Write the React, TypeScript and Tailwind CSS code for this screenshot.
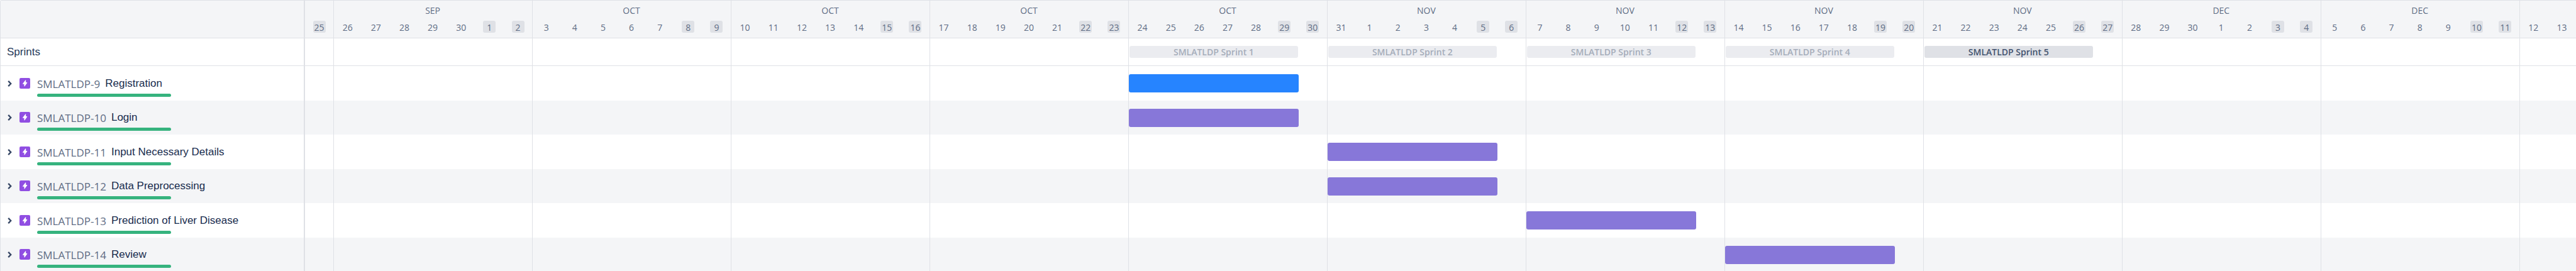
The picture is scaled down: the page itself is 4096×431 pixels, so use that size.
type Week = { month: string; days: number[] };

const weeks: Week[] = [
  { month: "SEP", days: [26, 27, 28, 29, 30, 1, 2] },
  { month: "OCT", days: [3, 4, 5, 6, 7, 8, 9] },
  { month: "OCT", days: [10, 11, 12, 13, 14, 15, 16] },
  { month: "OCT", days: [17, 18, 19, 20, 21, 22, 23] },
  { month: "OCT", days: [24, 25, 26, 27, 28, 29, 30] },
  { month: "NOV", days: [31, 1, 2, 3, 4, 5, 6] },
  { month: "NOV", days: [7, 8, 9, 10, 11, 12, 13] },
  { month: "NOV", days: [14, 15, 16, 17, 18, 19, 20] },
  { month: "NOV", days: [21, 22, 23, 24, 25, 26, 27] },
  { month: "DEC", days: [28, 29, 30, 1, 2, 3, 4] },
  { month: "DEC", days: [5, 6, 7, 8, 9, 10, 11] },
];

const sprints = [
  { name: "SMLATLDP Sprint 1", start: "col-start-30", active: false },
  { name: "SMLATLDP Sprint 2", start: "col-start-37", active: false },
  { name: "SMLATLDP Sprint 3", start: "col-start-44", active: false },
  { name: "SMLATLDP Sprint 4", start: "col-start-51", active: false },
  { name: "SMLATLDP Sprint 5", start: "col-start-58", active: true },
];

const epics = [
  { id: "SMLATLDP-9", title: "Registration", start: "col-start-30", color: "bg-[#2684ff]" },
  { id: "SMLATLDP-10", title: "Login", start: "col-start-30", color: "bg-[#8777d9]" },
  { id: "SMLATLDP-11", title: "Input Necessary Details", start: "col-start-37", color: "bg-[#8777d9]" },
  { id: "SMLATLDP-12", title: "Data Preprocessing", start: "col-start-37", color: "bg-[#8777d9]" },
  { id: "SMLATLDP-13", title: "Prediction of Liver Disease", start: "col-start-44", color: "bg-[#8777d9]" },
  { id: "SMLATLDP-14", title: "Review", start: "col-start-51", color: "bg-[#8777d9]" },
];

// Every timeline band shares one track per day.
const DAY_GRID = "grid grid-cols-[repeat(80,minmax(0,1fr))]";
const ROW = "odd:h-[55px] even:h-[54px] odd:bg-white even:bg-[#f4f5f7]";

function Day({ value, weekend = false }: { value: number; weekend?: boolean }) {
  return (
    <div className="flex justify-center">
      <span
        className={`h-[19px] w-5 rounded-[3px] pt-px text-center leading-[19px] ${weekend ? "bg-[#dfe1e6]" : ""}`}
      >
        {value}
      </span>
    </div>
  );
}

function TimelineHeader() {
  return (
    <div className={`${DAY_GRID} h-[60px] border-b border-[#dfe1e6] bg-[#f4f5f7] pt-1.5 text-sm text-[#5e6c84]`}>
      <div className="pt-[26px]">
        <Day value={25} weekend />
      </div>
      {weeks.map((week, i) => (
        <div key={i} className="col-span-7">
          <div className="mb-1.5 h-5 text-center leading-5">{week.month}</div>
          <div className="grid grid-cols-7">
            {week.days.map((d, j) => (
              <Day key={d} value={d} weekend={j > 4} />
            ))}
          </div>
        </div>
      ))}
      <div className="col-span-2 grid grid-cols-2 pt-[26px]">
        <Day value={12} />
        <Day value={13} />
      </div>
    </div>
  );
}

function SprintBand() {
  return (
    <div className={`${DAY_GRID} h-11 items-center border-b border-[#dfe1e6] bg-white`}>
      {sprints.map((s) => (
        <div key={s.name} className={`${s.start} col-span-6 row-start-1 pr-px pl-0.5`}>
          <div
            className={`h-[19px] rounded-[3px] text-center text-sm leading-[19px] font-semibold ${
              s.active ? "bg-[#dfe1e6] text-[#42526e]" : "bg-[#ebecf0] text-[#a5adba]"
            }`}
          >
            {s.name}
          </div>
        </div>
      ))}
    </div>
  );
}

function WeekLines() {
  return (
    <div className={`${DAY_GRID} pointer-events-none absolute inset-0`}>
      <div />
      {weeks.map((_, i) => (
        <div key={i} className="col-span-7 border-l border-[#dfe1e6]" />
      ))}
      <div className="col-span-2 border-l border-[#dfe1e6]" />
    </div>
  );
}

function EpicRow({ id, title }: { id: string; title: string }) {
  return (
    <li className={`${ROW} flex flex-col justify-end pb-1.5`}>
      <div className="flex h-[33px] items-center pl-[11px]">
        <button type="button" aria-label={`Expand ${title}`} className="mr-3 flex w-[7px] justify-center">
          <svg width="7" height="10" viewBox="0 0 7 10" fill="none" stroke="#344563" strokeWidth="2.3">
            <path d="M1.2 0.9 5.2 5 1.2 9.1" />
          </svg>
        </button>
        <svg className="mr-[11px]" width="17" height="17" viewBox="0 0 16 16" aria-hidden="true">
          <rect width="16" height="16" rx="2" fill="#904ee2" />
          <path d="M8.8 3.3c.3-.4.8-.2.8.3v3.1h1.5c.4 0 .6.4.4.7L7.8 12.4c-.3.4-.8.2-.8-.3V9.1H5.2c-.4 0-.6-.4-.4-.7z" fill="#fff" />
        </svg>
        <a href={`#${id}`} className="mr-2 pt-[3px] text-[17px] leading-5 text-[#5e6c84]">
          {id}
        </a>
        <span className="font-['Liberation_Sans',Arial,sans-serif] text-[17px] leading-5 text-[#172b4d]">{title}</span>
      </div>
      <div
        role="progressbar"
        aria-label={`${title} progress`}
        aria-valuenow={100}
        className="ml-[58px] h-[5px] w-[213px] rounded-full bg-[#36b37e]"
      />
    </li>
  );
}

export default function App() {
  return (
    <main className="flex h-screen items-start overflow-hidden rounded-tl-[3px] border-t border-l border-[#dfe1e6] bg-white font-['Open_Sans','Noto_Sans',sans-serif]">
      <section className="w-[484px] shrink-0 border-r-2 border-[#dfe1e6]">
        <div className="h-[60px] border-b border-[#dfe1e6] bg-[#f4f5f7]" />
        <h2 className="flex h-11 items-center border-b border-[#dfe1e6] pl-2.5 font-['Liberation_Sans',Arial,sans-serif] text-[17px] leading-5 text-[#253858]">
          Sprints
        </h2>
        <ul>
          {epics.map((e) => (
            <EpicRow key={e.id} id={e.id} title={e.title} />
          ))}
        </ul>
      </section>
      <section className="relative min-w-0 flex-1">
        <TimelineHeader />
        <SprintBand />
        <div>
          {epics.map((e) => (
            <div key={e.id} className={`${ROW} ${DAY_GRID} items-center`}>
              <div className={`${e.start} col-span-6 pl-px`}>
                <div className={`h-[29px] rounded-[3px] ${e.color}`} />
              </div>
            </div>
          ))}
        </div>
        <WeekLines />
      </section>
    </main>
  );
}
